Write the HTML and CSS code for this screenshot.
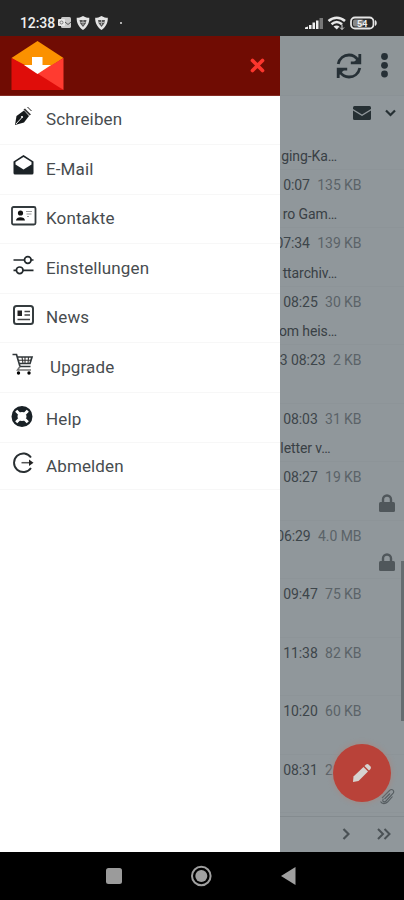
FILE: index.html
```
<!DOCTYPE html>
<html lang="de">
<head>
<meta charset="utf-8">
<title>Mail</title>
<link rel="stylesheet" href="styles.css">
</head>
<body>
<div class="status">
  <span class="clock">12:38</span>
  <svg class="notif" width="64" height="16" viewBox="0 0 64 16">
    <rect x="3" y="2" width="10" height="11" rx="1.5" fill="#c9c9c9"/><rect x="0" y="4" width="7" height="7" rx="1" fill="#e8e8e8"/><circle cx="3.5" cy="7.5" r="1.5" fill="none" stroke="#777"/><path d="M7 7l3 2.5 3-2.5" fill="none" stroke="#555"/>
    <g id="shield"><path d="M25 1c2 1.300 4.500 1.800 6.300 1.800C31.600 8 29 12.500 25 15 21 12.500 18.400 8 18.700 2.800 20.500 2.800 23 2.300 25 1z" fill="#e4e4e4"/><path d="M21.500 5h7l-.8 3.500-2.700 3.500-2.700-3.500z" fill="#555"/><path d="M22.500 7.500h5M25 5v5" stroke="#aaa"/></g>
    <use href="#shield" x="18.500"/>
    <circle cx="63" cy="8" r="1" fill="#ddd"/>
  </svg>
  <svg class="signals" width="74" height="16" viewBox="0 0 74 16">
    <path d="M0 14v-1.500l3-1V14zM4 14v-4h2.500v4zM7.500 14V7.500H10V14zM11 14V5.500h2.500V14z" fill="#eee"/><path d="M14.500 14V3H18v11z" fill="#777"/>
    <g fill="none" stroke="#e8e8e8" stroke-width="2.500"><path d="M23.500 6c5-4.500 11.500-4.500 16.500 0"/><path d="M26.500 9.300c3.200-2.800 7.300-2.800 10.500 0"/></g><path d="M28.500 11.500c1.700-1.500 4.300-1.500 6 0L31.800 14.500z" fill="#e8e8e8"/><path d="M37 9.500v5M35 12.500l2 2 2-2" stroke="#ddd" fill="none"/>
    <rect x="46" y="2.500" width="22.500" height="11" rx="4" fill="#262626" stroke="#e5e5e5" stroke-width="1.800"/><rect x="48" y="4.500" width="11" height="7" rx="2" fill="#888"/><path d="M70 5c2.300 1 2.300 5 0 6z" fill="#e5e5e5"/>
    <text x="52" y="11.500" class="batt">54</text>
  </svg>
</div>

<div class="main">
  <nav class="drawer">
    <header class="brand">
      <svg class="logo" width="53" height="50" viewBox="0 0 53 50">
        <path d="M.500 17 26.500 0l26 17-26 17z" fill="#fb9100"/>
        <path d="M.500 17 34 34.500 52.500 49H.500z" fill="#df0d0a"/><path d="M52.500 17v32L26.500 32.500z" fill="#ff3b30"/><path d="M13 17h28L26.500 32.800z" fill="#fb9100"/>
        <path d="M21 16h10.500v8H40L26.500 33 13 24h8z" fill="#fff"/>
      </svg>
      <svg class="close" width="17" height="17" viewBox="0 0 17 17"><path d="M3.500 3.500l10 10M13.500 3.500l-10 10" stroke="#fb362d" stroke-width="3.700" stroke-linecap="round"/></svg>
    </header>
    <ul class="menu">
      <li><svg viewBox="0 0 26 24"><path d="M4 20l1.500-9 7.500-5.500 5 5.500-5 6.500z" fill="#14181a"/><path d="M5 19l5.500-6" stroke="#fff" stroke-width=".9"/><circle cx="11" cy="12" r="1.100" fill="#fff"/><path d="M14 3.500l6 6-1.500 1-6-6z" fill="#333"/><path d="M16.500 2l4 4" stroke="#222"/></svg><span>Schreiben</span></li>
      <li><svg viewBox="0 0 26 24"><path d="M2.500 7.500 12.500 1l10 6.500V19q0 1.500-1.500 1.500H4q-1.500 0-1.500-1.500z" fill="#1c2327"/><path d="M4.500 8l8-5 8 5v2.500l-8 5-8-5z" fill="#fff"/></svg><span>E-Mail</span></li>
      <li><svg viewBox="0 0 26 24"><rect x="1" y="3" width="23.500" height="17.500" rx="1.500" fill="none" stroke="#333a3d" stroke-width="1.800"/><circle cx="9.500" cy="9" r="2.600" fill="#111"/><path d="M5 16.500c0-4.500 9-4.500 9 0z" fill="#111"/><path d="M15 7.500h6M15.500 10h5M16 12.500h2" stroke="#999"/></svg><span>Kontakte</span></li>
      <li><svg viewBox="0 0 26 24"><g fill="none" stroke="#22282b" stroke-width="1.700"><path d="M2.500 7h11M20 7h2.500M2.500 17.300h3M12 17.300h10.500"/><circle cx="16.800" cy="7" r="3.300"/><circle cx="8.700" cy="17.300" r="3.300"/></g></svg><span>Einstellungen</span></li>
      <li><svg viewBox="0 0 26 24"><rect x="3" y="3" width="19" height="18" rx="2.500" fill="none" stroke="#353c3f" stroke-width="2"/><path d="M6.500 7.500H11V13H6.500z" fill="#222"/><path d="M13.500 8.500h5.500M13.500 12h5.500M6.500 16.500H19" stroke="#444" stroke-width="1.500"/></svg><span>News</span></li>
      <li class="cart"><svg viewBox="0 0 26 24"><path d="M1.500 2.500h4l3.500 12h10.500M6.500 5h14.500l-2 6.500H8.500" fill="none" stroke="#30373a" stroke-width="1.700"/><path d="M9 14.500L6.500 18H20" fill="none" stroke="#777" stroke-width="1.500"/><path d="M7.500 8.300h12.500M11 5l1 6.500M14 5v6.500M17.500 5l-.5 6.500" stroke="#333" stroke-width="1.100"/><circle cx="7.500" cy="21" r="1.700"/><circle cx="18" cy="21" r="1.700"/></svg><span>Upgrade</span></li>
      <li class="help"><svg viewBox="0 0 26 24"><circle cx="11" cy="11.500" r="7.500" fill="none" stroke="#192126" stroke-width="6"/><path d="M5.200 5.700l3 3M16.800 5.700l-3 3M5.200 17.300l3-3M16.800 17.300l-3-3" stroke="#fff" stroke-width="3"/></svg><span>Help</span></li>
      <li class="exit"><svg viewBox="0 0 26 24"><path d="M20 6.500A9.300 9.300 0 1 0 20 17" fill="none" stroke="#292f32" stroke-width="1.900"/><path d="M10.500 11.700H18" stroke="#555" stroke-width="1.500"/><path d="M18 8.500l4.500 3.200-4.500 3.200z" fill="#222"/></svg><span>Abmelden</span></li>
    </ul>
  </nav>

  <section class="mail">
    <div class="toolbar">
      <svg width="26" height="26" viewBox="0 0 26 26"><g fill="none" stroke="#263036" stroke-width="2.800"><path d="M2.200 11C3.500 5 8 2 13 2c4 0 7 2 9 5"/><path d="M23.800 15C22.500 21 18 24 13 24c-4 0-7-2-9-5"/><path d="M23.800 1v8.800h-9M2.200 25v-8.800h9"/></g><path d="M24 3v7h-7zM2 23v-7h7z" fill="#263036"/></svg>
      <svg width="9" height="26" viewBox="0 0 9 26"><g fill="#263036"><circle cx="4.500" cy="3.500" r="3.400"/><circle cx="4.500" cy="12.300" r="3.400"/><circle cx="4.500" cy="21" r="3.400"/></g></svg>
    </div>
    <div class="filter">
      <svg width="18" height="14" viewBox="0 0 18 14"><path d="M1.500 0h15Q18 0 18 1.500V3l-9 5.500L0 3V1.500Q0 0 1.500 0z" fill="#263034"/><path d="M0 4.500l9 5.500 9-5.500v8q0 1.500-1.500 1.500h-15Q0 14 0 12.500z" fill="#263034"/></svg>
      <svg width="11" height="8" viewBox="0 0 11 8"><path d="M1 1.500l4.500 4.500L10 1.500" fill="none" stroke="#263034" stroke-width="2.200"/></svg>
    </div>
    <div class="list">
      <div class="row first"><p class="subject">ging-Ka…</p></div>
      <div class="row"><p class="meta"><b>0:07</b> 135 KB</p><p class="subject">ro Gam…</p></div>
      <div class="row"><p class="meta"><b>07:34</b> 139 KB</p><p class="subject">ttarchiv…</p></div>
      <div class="row"><p class="meta"><b>08:25</b> 30 KB</p><p class="subject">om heis…</p></div>
      <div class="row"><p class="meta"><b>3 08:23</b> 2 KB</p></div>
      <div class="row"><p class="meta"><b>08:03</b> 31 KB</p><p class="subject shorter">letter v…</p></div>
      <div class="row"><p class="meta"><b>08:27</b> 19 KB</p><svg class="lock" viewBox="0 0 16 18"><path d="M1.500 8h13q1.500 0 1.500 1.500v7q0 1.500-1.500 1.500h-13Q0 18 0 16.500v-7Q0 8 1.500 8z" fill="#50575b"/><path d="M4 9V5.500a4 4 0 0 1 8 0V9" fill="none" stroke="#50575b" stroke-width="2.400"/></svg></div>
      <div class="row"><p class="meta"><b>06:29</b> 4.0 MB</p><svg class="lock" viewBox="0 0 16 18"><path d="M1.500 8h13q1.500 0 1.500 1.500v7q0 1.500-1.500 1.500h-13Q0 18 0 16.500v-7Q0 8 1.500 8z" fill="#50575b"/><path d="M4 9V5.500a4 4 0 0 1 8 0V9" fill="none" stroke="#50575b" stroke-width="2.400"/></svg></div>
      <div class="row"><p class="meta"><b>09:47</b> 75 KB</p></div>
      <div class="row"><p class="meta"><b>11:38</b> 82 KB</p></div>
      <div class="row"><p class="meta"><b>10:20</b> 60 KB</p></div>
      <div class="row last"><p class="meta"><b>08:31</b> 21 KB</p><svg class="lock" viewBox="0 0 16 18"><path d="M5.500 12l5.500-5.500M3 11l7.500-7.500c2.500-2.500 5.500.5 3.500 3l-7 7.500c-2 2-4.500 0-2.500-2.200M1.500 14.500c1.500 3 5 2.500 7 .5l5-5.500" fill="none" stroke="#555c60" stroke-width="1.100"/></svg></div>
      <i class="scroll"></i>
    </div>
    <div class="pager">
      <svg width="8" height="12" viewBox="0 0 8 12"><path d="M1.500 1L6.500 6l-5 5" fill="none" stroke="#4a5155" stroke-width="2.200"/></svg>
      <svg width="14" height="12" viewBox="0 0 14 12"><path d="M1 1l5 5-5 5M7.500 1l5 5-5 5" fill="none" stroke="#4a5155" stroke-width="2"/></svg>
    </div>
    <div class="fab"><svg width="20" height="20" viewBox="0 0 20 20"><path d="M1 19l.5-5.500L11.500 4l4.500 4.500L6.500 18z" fill="#d6d3d0"/><path d="M12.500 3L14 1.500q1.500-1 2.500 0l2 2q1 1 0 2.500L17 7.500z" fill="#d6d3d0"/></svg></div>
  </section>
</div>

<div class="navbar">
  <svg width="404" height="48" viewBox="0 0 404 48"><rect x="106" y="16" width="16" height="16" rx="2.500" fill="#9b9b9b"/><circle cx="201.300" cy="24" r="9.300" fill="none" stroke="#a0a0a0" stroke-width="2"/><circle cx="201.300" cy="24" r="6" fill="#a0a0a0"/><path d="M281 24l14.500-9v18z" fill="#a0a0a0"/></svg>
</div>
</body>
</html>
```
FILE: styles.css
```
* { box-sizing: border-box; }
body { margin: 0; width: 404px; height: 900px; overflow: hidden; background: #000; font-family: Roboto, "Liberation Sans", sans-serif; display: flex; flex-direction: column; }
svg { display: block; flex: none; }
p, ul { margin: 0; padding: 0; }

.status { height: 35.5px; background: #252525; display: flex; align-items: flex-start; padding: 15px 25px 0 20px; }
.clock { color: #eee; font-size: 14px; font-weight: 500; line-height: 17px; letter-spacing: -.1px; width: 38px; white-space: nowrap; }
.signals { margin-left: auto; }
.batt { font-size: 9px; font-weight: 700; fill: #eee; }

.main { height: 816.5px; display: flex; }
.drawer { width: 280px; background: #fff; }
.brand { height: 60px; background: #700c03; border-bottom: 1px solid #852c24; display: flex; justify-content: space-between; padding: 5.5px 14px 0 11px; }
.close { margin-top: 16px; }
.menu { list-style: none; }
.menu li { height: 49.5px; display: flex; align-items: flex-start; padding: 9px 0 0 11px; border-bottom: 1px solid #f7f7f7; }
.menu svg { width: 26px; height: 24px; }
.menu span { margin-left: 9px; margin-top: 3.5px; font-size: 17px; line-height: 22px; color: #474c4f; font-weight: 400; letter-spacing: .13px; white-space: nowrap; }
.menu .cart span { margin-left: 13px; }
.menu .help { height: 50.5px; padding-top: 12px; }
.menu .help span { margin-top: 3px; }
.menu .exit { height: 47px; padding-top: 8px; }
.menu .exit span { margin-top: 4px; }

.mail { flex: 1; position: relative; overflow: hidden; background: #90979b; display: flex; flex-direction: column; }
.toolbar { height: 60px; background: #8e9598; border-bottom: 1px solid #8b9296; display: flex; gap: 18px; justify-content: flex-end; padding: 17px 15.5px 0 0; }
.filter { height: 36.5px; display: flex; align-items: center; justify-content: flex-end; gap: 14px; padding: 0 8px 2px 0; }
.list { position: relative; height: 684px; overflow: hidden; }
.row { position: relative; height: 58.5px; border-bottom: 1px solid #8d9498; padding: 6px 42.5px 0 0; display: flex; flex-direction: column; align-items: flex-end; }
.row.first { height: 37.5px; padding-top: 15px; }
.meta, .subject { font-size: 14px; line-height: 18px; white-space: nowrap; }
.meta { color: #5b6368; letter-spacing: -.07px; }
.meta b { font-weight: 400; color: #3d454a; margin-right: 4px; }
.subject { color: #394045; margin: 11.5px 24.5px 0 0; letter-spacing: -.1px; }
.first .subject { margin-top: 0; }
.subject.shorter { margin-right: 31px; }
.lock { position: absolute; right: 9px; top: 32px; width: 16px; height: 18px; }
.scroll { position: absolute; right: 0; top: 429px; width: 3px; height: 160px; background: #656c70; }
.pager { flex: 1; border-top: 1px solid #848b8f; display: flex; align-items: center; justify-content: flex-end; gap: 27px; padding: 0 13px 2px 0; }
.fab { position: absolute; left: 53px; top: 708px; width: 58px; height: 58px; border-radius: 50%; background: #b94239; box-shadow: 0 0 5px 1px #a08b87; display: flex; align-items: center; justify-content: center; }
.navbar { height: 48px; background: #000; }
```
